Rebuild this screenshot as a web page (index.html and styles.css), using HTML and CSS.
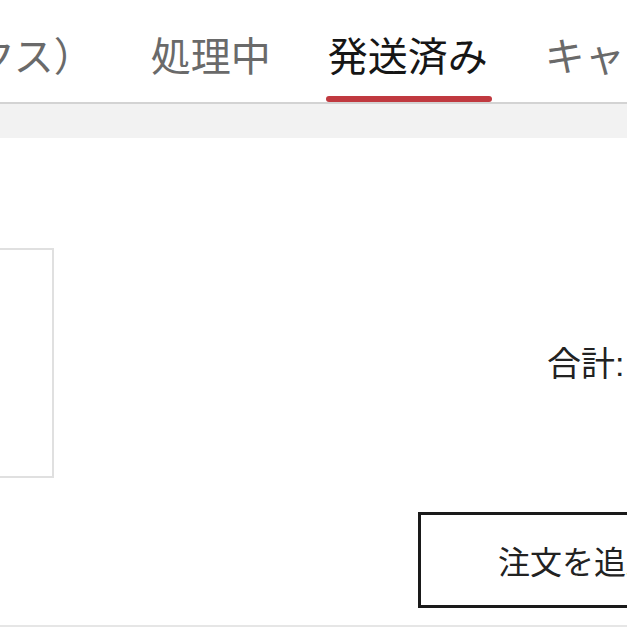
FILE: index.html
```html
<!DOCTYPE html>
<html lang="ja">
<head>
    <meta charset="UTF-8">
    <meta name="viewport" content="width=device-width, initial-scale=1.0">
    <title>注文履歴</title>
    <link rel="stylesheet" href="styles.css">
</head>
<body>
    <div class="header">
        <div class="tabs">
            <div class="tab">未払い（ボックス）</div>
            <div class="tab">処理中</div>
            <div class="tab active">発送済み</div>
            <div class="tab">キャンセル</div>
        </div>
    </div>
    <div class="band"></div>

    <div class="order">
        <div class="order-body">
            <div class="thumb"></div>
            <div class="summary">
                <p class="total">合計: <span class="amount">¥3,280</span></p>
            </div>
        </div>
        <div class="actions">
            <button class="btn">注文を追跡</button>
        </div>
    </div>
</body>
</html>
```

FILE: styles.css
```css
html, body {
    margin: 0;
    padding: 0;
    background-color: #fff;
    overflow: hidden;
}
body {
    font-family: 'Liberation Sans', 'Noto Sans CJK JP', sans-serif;
    color: #1f1f1f;
    width: 627px;
    height: 627px;
}
.header {
    height: 102px;
    border-bottom: 2px solid #d3d3d3;
    overflow: hidden;
}
.tabs {
    display: flex;
    gap: 57px;
    margin-left: -265px;
    white-space: nowrap;
}
.tab {
    position: relative;
    flex: none;
    font-size: 40px;
    line-height: 48px;
    height: 102px;
    padding-top: 33px;
    box-sizing: border-box;
    color: #6a6a6a;
}
.tab.active {
    color: #161616;
}
.tab.active::after {
    content: '';
    position: absolute;
    left: -2px;
    bottom: 0;
    width: calc(100% + 6px);
    height: 6px;
    border-radius: 3px;
    background-color: #c0393f;
}
.band {
    height: 34px;
    background-color: #f2f2f2;
}
.order {
    padding-top: 110px;
    padding-bottom: 17px;
    border-bottom: 2px solid #e6e6e6;
}
.order-body {
    display: flex;
}
.thumb {
    flex: none;
    width: 104px;
    height: 230px;
    margin-left: -50px;
    border: 2px solid #e0e0e0;
    box-sizing: border-box;
}
.summary {
    padding-left: 493px;
    padding-top: 96px;
    white-space: nowrap;
}
.total {
    margin: 0;
    font-size: 34px;
    line-height: 41px;
    color: #222;
}
.actions {
    margin-top: 34px;
    padding-left: 418px;
    white-space: nowrap;
}
.btn {
    width: 320px;
    height: 96px;
    border: 3px solid #1a1a1a;
    background-color: #fff;
    font-family: inherit;
    font-size: 32px;
    color: #222;
    padding: 0;
}
```
